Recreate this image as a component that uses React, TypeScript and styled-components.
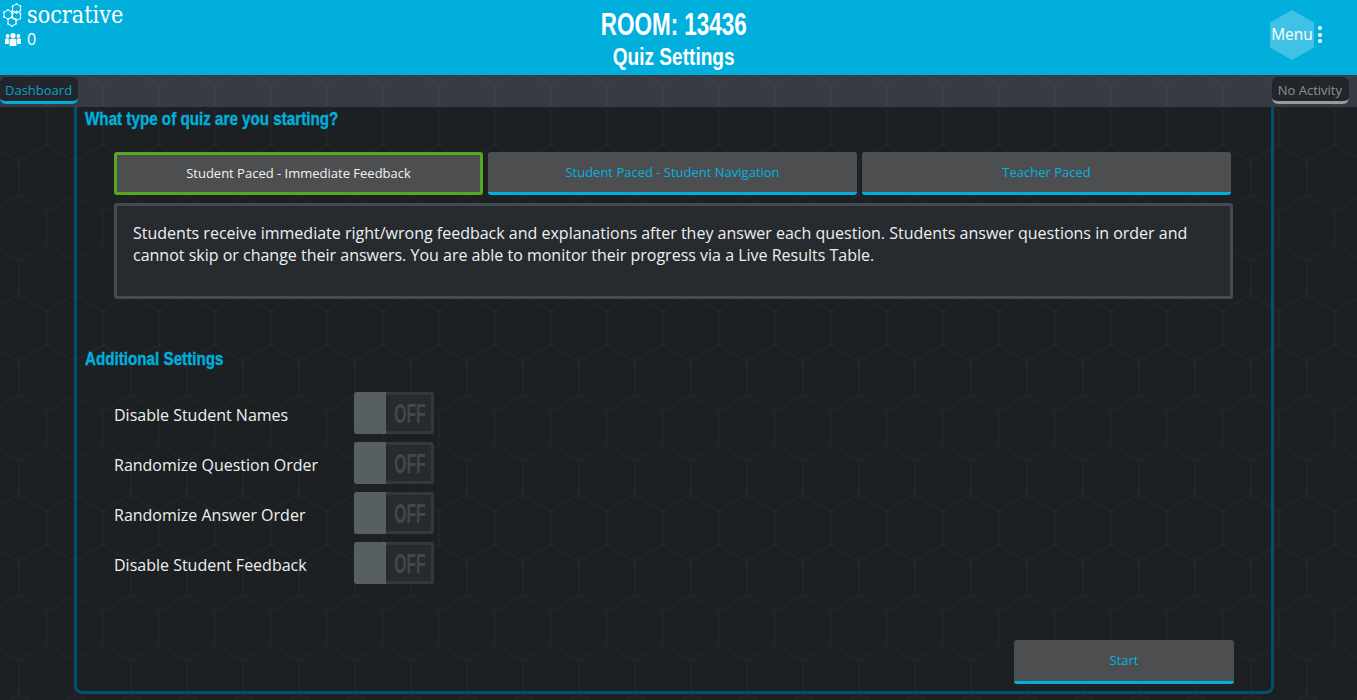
import * as React from 'react'
import styled, { createGlobalStyle } from 'styled-components'

const hexTile = (stroke: string) => {
  const svg = `<svg xmlns="http://www.w3.org/2000/svg" width="56" height="100"><path fill="none" stroke="${stroke}" stroke-width="1" d="M19 61V95L47 111M19 95L-9 111M47 11V45L19 61M47 45L75 61M19 -5L47 11M19 -5L-9 11M75 -5L47 11M-9 45L19 61"/></svg>`
  return `url("data:image/svg+xml,${encodeURIComponent(svg)}")`
}

const GlobalStyle = createGlobalStyle`
  html, body {
    margin: 0;
    height: 100%;
    overflow: hidden;
    background-color: #1c2022;
    background-image: ${hexTile('#26292b')};
    font-family: "Open Sans", "Noto Sans", sans-serif;
    color: #eef0f0;
  }
  * { box-sizing: border-box; }
`

const Header = styled.header`
  height: 75px;
  background: #00afdc;
  display: grid;
  grid-template-columns: 1fr auto 1fr;
  color: #fff;
`

const Brand = styled.div`
  padding: 2px 0 0 3px;
  display: flex;
  flex-direction: column;
`

const LogoRow = styled.div`
  display: flex;
  align-items: center;
  gap: 4px;
  height: 25px;
`

const LogoText = styled.span`
  font-family: "DejaVu Serif", "Liberation Serif", serif;
  font-size: 24px;
  line-height: 24px;
  font-weight: 400;
`

const UserCount = styled.div`
  display: flex;
  align-items: center;
  gap: 6px;
  height: 24px;
  padding-left: 2px;
  font-size: 16px;
`

const Titles = styled.div`
  padding-right: 10px;
  text-align: center;
  font-family: "Liberation Sans", sans-serif;
  font-weight: 700;
`

// no Oswald here, so Liberation Sans bold gets squeezed to its width
const Squeezed = styled.span<{ $x: number; $origin?: string }>`
  display: inline-block;
  white-space: nowrap;
  transform: scaleX(${p => p.$x});
  transform-origin: ${p => p.$origin || 'center'};
`

const RoomTitle = styled.div`
  font-size: 31px;
  line-height: 34px;
  margin-top: 8px;
`

const PageTitle = styled.div`
  font-size: 24px;
  line-height: 28px;
  margin-top: 1px;
`

const MenuArea = styled.div`
  display: flex;
  justify-content: flex-end;
  align-items: flex-start;
  padding: 10px 35px 0 0;
`

const MenuHex = styled.div`
  width: 44px;
  height: 50px;
  padding-bottom: 2px;
  background: #40c2e6;
  clip-path: polygon(50% 0, 100% 25%, 100% 75%, 50% 100%, 0 75%, 0 25%);
  display: flex;
  align-items: center;
  justify-content: center;
  font-size: 15.5px;
`

const Kebab = styled.div`
  display: flex;
  flex-direction: column;
  gap: 2.5px;
  margin: 16px 0 0 4px;
`

const Dot = styled.span`
  width: 4px;
  height: 4px;
  border-radius: 50%;
  background: #fff;
`

const StatusBar = styled.div`
  height: 32px;
  background-color: #363b44;
  background-image: ${hexTile('#40454e')};
  display: flex;
  justify-content: space-between;
  padding: 2px 8px 0 0;
`

const Pill = styled.div<{ $color: string; $line: string }>`
  height: 27px;
  padding: 0 6px 0 5px;
  border-radius: 6px;
  background: #22262b;
  border-bottom: 3px solid ${p => p.$line};
  font-size: 13px;
  line-height: 26px;
  color: ${p => p.$color};
`

const ActivityPill = styled(Pill)`
  padding: 0 7px 0 6px;
`

const Panel = styled.main`
  width: 1200px;
  height: 587px;
  margin-left: 74px;
  border: 3px solid #01506d;
  border-top: none;
  border-radius: 0 0 8px 8px;
  padding: 0 37px 0 8px;
  position: relative;
`

const SectionTitle = styled.h2`
  margin: 0;
  font-family: "Liberation Sans", sans-serif;
  font-weight: 700;
  font-size: 19px;
  line-height: 24px;
  color: #00afdc;
  -webkit-text-stroke: 0.4px #00afdc;
`

const Indented = styled.div`
  margin-left: 29px;
`

const Tabs = styled.div`
  display: flex;
  gap: 5px;
  margin-top: 21px;
`

const Tab = styled.button<{ $active?: boolean }>`
  width: 369px;
  height: 43px;
  padding: ${p => (p.$active ? '0 0 2px' : '0')};
  font: 13px "Open Sans", "Noto Sans", sans-serif;
  background: #4d4e50;
  border-radius: 3px;
  border: ${p => (p.$active ? '3px solid #57a81f' : 'none')};
  ${p => !p.$active && 'border-bottom: 3px solid #00afdc;'}
  color: ${p => (p.$active ? '#f2f2f2' : '#00b4e2')};
`

const Description = styled.div`
  width: 1119px;
  height: 96px;
  margin-top: 8px;
  padding: 16px 16px 0;
  background: #272b2f;
  border: 3px solid #444b54;
  border-radius: 3px;
  font-size: 16px;
  line-height: 22px;
`

const SettingsTitle = styled(SectionTitle)`
  margin-top: 48px;
`

const SettingsList = styled(Indented)`
  margin-top: 21px;
  display: flex;
  flex-direction: column;
  gap: 8px;
`

const SettingRow = styled.div`
  display: flex;
  align-items: center;
  height: 42px;
`

const SettingLabel = styled.span`
  width: 240px;
  padding-top: 4px;
  font-size: 16px;
`

const Toggle = styled.div`
  width: 80px;
  height: 42px;
  display: flex;
  border: 3px solid #33383a;
  border-left: none;
  border-radius: 3px;
  background: #272b2d;
`

const ToggleHandle = styled.span`
  flex: 0 0 32px;
  margin: -3px 0;
  background: #585f62;
  border-radius: 3px 0 0 3px;
`

const ToggleLabel = styled.span`
  flex: 1;
  min-width: 0;
  display: flex;
  justify-content: center;
  padding-left: 2px;
  font-family: "Liberation Sans", sans-serif;
  font-weight: 700;
  font-size: 28px;
  line-height: 38px;
  color: #43484a;
`

const StartButton = styled.button`
  position: absolute;
  right: 37px;
  bottom: 7px;
  width: 220px;
  height: 44px;
  padding: 0 0 1px;
  font: 13px "Open Sans", "Noto Sans", sans-serif;
  color: #00b4e2;
  background: #4d4e50;
  border: none;
  border-bottom: 3px solid #00afdc;
  border-radius: 3px;
`

const hexPoints = (cx: number, cy: number, s: number) => {
  const w = s * 0.866
  return [
    [cx, cy - s],
    [cx + w, cy - s / 2],
    [cx + w, cy + s / 2],
    [cx, cy + s],
    [cx - w, cy + s / 2],
    [cx - w, cy - s / 2],
  ]
}

const logoCells = [
  [13.5, 6.5],
  [5, 12.5],
  [13.5, 14],
  [9, 19.5],
]

const LogoMark = () => (
  <svg width="20" height="25" viewBox="0 0 20 25" fill="none" stroke="#fff" strokeWidth="1">
    {logoCells.map(([cx, cy]) => {
      const pts = hexPoints(cx, cy, 4.6)
      return (
        <g key={`${cx}-${cy}`}>
          <polygon points={pts.map(p => p.join(',')).join(' ')} />
          {pts.map(([x, y]) => (
            <circle key={`${x}-${y}`} cx={x} cy={y} r="0.9" fill="#fff" stroke="none" />
          ))}
        </g>
      )
    })}
  </svg>
)

const UsersIcon = () => (
  <svg width="16" height="13" viewBox="0 0 16 13" fill="#fff">
    <circle cx="8" cy="2.6" r="2.6" />
    <circle cx="2.6" cy="3" r="1.9" />
    <circle cx="13.4" cy="3" r="1.9" />
    <path d="M4.6 7.2Q4.6 5.8 6 5.8H10Q11.4 5.8 11.4 7.2V13H4.6Z" />
    <path d="M0 6.6Q0 5.4 1.2 5.4H3.8V11H0Z" />
    <path d="M12.2 5.4H14.8Q16 5.4 16 6.6V11H12.2Z" />
  </svg>
)

const settings = [
  'Disable Student Names',
  'Randomize Question Order',
  'Randomize Answer Order',
  'Disable Student Feedback',
]

export default function App() {
  return (
    <>
      <GlobalStyle />
      <Header>
        <Brand>
          <LogoRow>
            <LogoMark />
            <LogoText><Squeezed $x={0.867} $origin="left">socrative</Squeezed></LogoText>
          </LogoRow>
          <UserCount>
            <UsersIcon />
            0
          </UserCount>
        </Brand>
        <Titles>
          <RoomTitle><Squeezed $x={0.725}>ROOM: 13436</Squeezed></RoomTitle>
          <PageTitle><Squeezed $x={0.795}>Quiz Settings</Squeezed></PageTitle>
        </Titles>
        <MenuArea>
          <MenuHex>Menu</MenuHex>
          <Kebab>
            <Dot />
            <Dot />
            <Dot />
          </Kebab>
        </MenuArea>
      </Header>
      <StatusBar>
        <Pill $color="#0f9fc8" $line="#00afdc">Dashboard</Pill>
        <ActivityPill $color="#8d8f92" $line="#9a9a9a">No Activity</ActivityPill>
      </StatusBar>
      <Panel>
        <SectionTitle>
          <Squeezed $x={0.8} $origin="left">What type of quiz are you starting?</Squeezed>
        </SectionTitle>
        <Indented>
          <Tabs>
            <Tab $active>Student Paced - Immediate Feedback</Tab>
            <Tab>Student Paced - Student Navigation</Tab>
            <Tab>Teacher Paced</Tab>
          </Tabs>
          <Description>
            Students receive immediate right/wrong feedback and explanations after they answer each question. Students answer questions in order and cannot skip or change their answers. You are able to monitor their progress via a Live Results Table.
          </Description>
        </Indented>
        <SettingsTitle>
          <Squeezed $x={0.8} $origin="left">Additional Settings</Squeezed>
        </SettingsTitle>
        <SettingsList>
          {settings.map(label => (
            <SettingRow key={label}>
              <SettingLabel>{label}</SettingLabel>
              <Toggle>
                <ToggleHandle />
                <ToggleLabel><Squeezed $x={0.56}>OFF</Squeezed></ToggleLabel>
              </Toggle>
            </SettingRow>
          ))}
        </SettingsList>
        <StartButton>Start</StartButton>
      </Panel>
    </>
  )
}
